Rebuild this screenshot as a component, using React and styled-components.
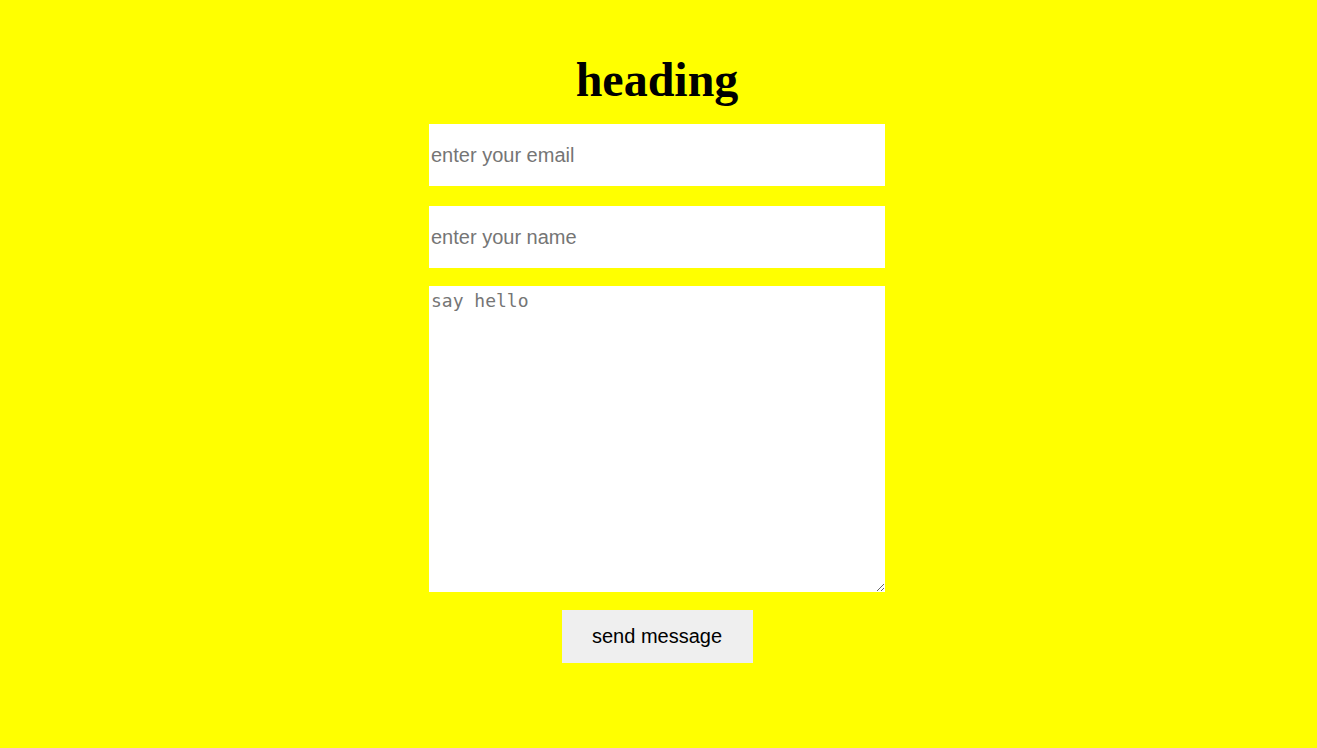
import React from "react";
import styled, { createGlobalStyle } from "styled-components";

const GlobalStyle = createGlobalStyle`
    html, body {
        margin: 0;
        padding: 0;
        background-color: #ffff00;
    }
`;

const Wrapper = styled.div`
    min-height: 100vh;
    background-color: #ffff00;
    display: flex;
    flex-direction: column;
    align-items: center;
    padding: 52px 3px 0 0;
    box-sizing: border-box;
`;

const Heading = styled.h1`
    font-family: "Liberation Serif", "Times New Roman", serif;
    font-weight: 700;
    font-size: 48px;
    line-height: 55px;
    margin: 0 0 17px;
    color: #000;
`;

const Form = styled.form`
    width: 456px;
    display: flex;
    flex-direction: column;
    align-items: center;
`;

const Field = styled.input`
    width: 100%;
    height: 62px;
    box-sizing: border-box;
    border: none;
    outline: none;
    padding: 1px 2px;
    margin-bottom: ${(p) => p.$gap}px;
    background: #fff;
    font-family: "Liberation Sans", Arial, sans-serif;
    font-size: 20px;
    color: #000;

    &::placeholder {
        color: #757575;
    }
`;

const Message = styled.textarea`
    width: 100%;
    height: 306px;
    box-sizing: border-box;
    border: none;
    outline: none;
    padding: 4px 2px;
    margin: 0 0 18px;
    display: block;
    background: #fff;
    font-family: "DejaVu Sans Mono", monospace;
    font-size: 18px;
    line-height: 1.2;
    color: #000;

    &::placeholder {
        color: #757575;
    }
`;

const SendButton = styled.button`
    width: 191px;
    height: 53px;
    border: none;
    background: #efefef;
    color: #000;
    font-family: "Liberation Sans", Arial, sans-serif;
    font-size: 20px;
    cursor: pointer;
`;

const App = () => {
    return (
        <>
            <GlobalStyle />
            <Wrapper>
                <Heading>heading</Heading>
                <Form onSubmit={(e) => e.preventDefault()}>
                    <Field type="email" placeholder="enter your email" $gap={20} />
                    <Field type="text" placeholder="enter your name" $gap={18} />
                    <Message placeholder="say hello" />
                    <SendButton type="submit">send message</SendButton>
                </Form>
            </Wrapper>
        </>
    );
};

export default App;
